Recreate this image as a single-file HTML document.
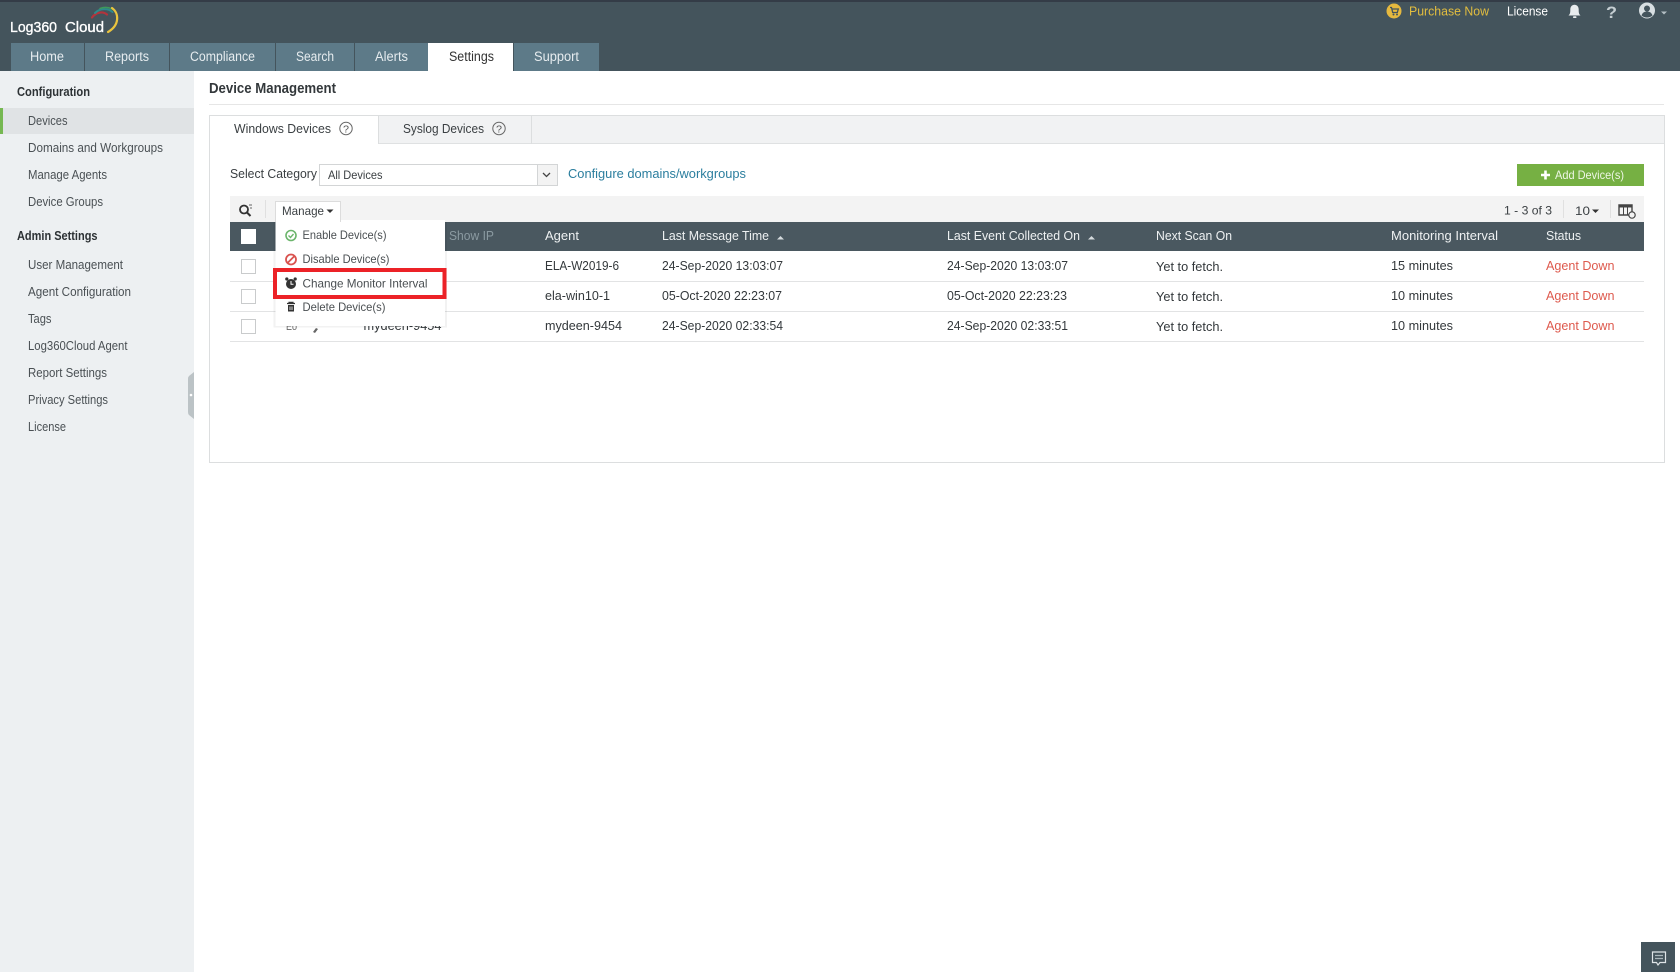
<!DOCTYPE html>
<html lang="en">
<head>
<meta charset="utf-8">
<title>Log360 Cloud - Device Management</title>
<style>
html,body{margin:0;padding:0;width:1680px;height:972px;overflow:hidden;background:#fff}
svg{display:block;filter:blur(.35px)}
text{font-family:"Liberation Sans",Arial,sans-serif;font-size:13px;fill:#3a3f42}
.nav{font-size:13.5px;fill:#e6ecef;text-anchor:start}
.side{fill:#4a5054;font-size:12.5px}
.b{font-weight:bold;fill:#2d3235;font-size:12.5px}
.th{fill:#eef1f2;font-size:13px}
.td{font-size:12.5px;fill:#33383b}
.red{fill:#de5a4e;font-size:12.5px}
.dd{fill:#4a4f52;font-size:12px}
</style>
</head>
<body>
<svg width="1680" height="972" viewBox="0 0 1680 972" xmlns="http://www.w3.org/2000/svg">
<rect width="1680" height="972" fill="#fff"/>

<!-- header -->
<rect width="1680" height="71" fill="#44545c"/>
<rect width="1680" height="2" fill="#343c47"/>
<text x="10" y="32" textLength="47" lengthAdjust="spacingAndGlyphs" style="font-size:15px;fill:#fff;stroke:#fff;stroke-width:.35px">Log360</text>
<text x="65" y="32" textLength="39" lengthAdjust="spacingAndGlyphs" style="font-size:15px;fill:#fff;stroke:#fff;stroke-width:.35px">Cloud</text>
<g fill="none" stroke-linecap="round">
<path d="M92 17.500C96 12 103 11 107 14.500" stroke="#b3343c" stroke-width="2.200"/>
<path d="M95 13C100 8 108 8 112.500 12" stroke="#2d8a8c" stroke-width="2"/>
<path d="M100 8.500C104 7 108 7 112 9" stroke="#3f9a5b" stroke-width="1.500"/>
<path d="M112 8C119 13 120 25 108 32" stroke="#eac43e" stroke-width="2.200"/>
</g>

<!-- nav tabs -->
<g fill="#5d7a88">
<rect x="11" y="43" width="73" height="28"/>
<rect x="85" y="43" width="84" height="28"/>
<rect x="170" y="43" width="105" height="28"/>
<rect x="276" y="43" width="78" height="28"/>
<rect x="355" y="43" width="73" height="28"/>
<rect x="514" y="43" width="85" height="28"/>
</g>
<rect x="428" y="43" width="85" height="28" fill="#fff"/>
<text class="nav" x="30" y="61" textLength="34" lengthAdjust="spacingAndGlyphs">Home</text>
<text class="nav" x="105" y="61" textLength="44" lengthAdjust="spacingAndGlyphs">Reports</text>
<text class="nav" x="190" y="61" textLength="65" lengthAdjust="spacingAndGlyphs">Compliance</text>
<text class="nav" x="296" y="61" textLength="38" lengthAdjust="spacingAndGlyphs">Search</text>
<text class="nav" x="375" y="61" textLength="33" lengthAdjust="spacingAndGlyphs">Alerts</text>
<text class="nav" x="449" y="61" textLength="45" lengthAdjust="spacingAndGlyphs" style="fill:#333">Settings</text>
<text class="nav" x="534" y="61" textLength="45" lengthAdjust="spacingAndGlyphs">Support</text>

<!-- top right -->
<circle cx="1394" cy="11" r="7.500" fill="#e6b93f"/>
<path d="M1390 7.500h1.500l1.200 5h4.600l1-3.500h-6.200" fill="none" stroke="#44545c" stroke-width="1.300"/>
<circle cx="1393.500" cy="14.500" r="1" fill="#44545c"/><circle cx="1397" cy="14.500" r="1" fill="#44545c"/>
<text x="1409" y="15.500" textLength="80" lengthAdjust="spacingAndGlyphs" style="font-size:13px;fill:#e2bd3f">Purchase Now</text>
<text x="1507" y="15.500" textLength="41" lengthAdjust="spacingAndGlyphs" style="font-size:13px;fill:#fff">License</text>
<path d="M1568.500 15.500c1.800-1.700 1.800-3.200 1.800-6 0-2.800 1.800-4.700 4.200-4.700s4.200 1.900 4.200 4.700c0 2.800 0 4.300 1.800 6z" fill="#e8ecee"/>
<rect x="1573" y="16.300" width="3.500" height="1.700" rx=".8" fill="#e8ecee"/>
<text x="1606" y="18" textLength="11" lengthAdjust="spacingAndGlyphs" style="font-size:17px;font-weight:bold;fill:#c5ced2">?</text>
<circle cx="1647" cy="10.500" r="8" fill="#d8dfe2"/>
<circle cx="1647" cy="8.500" r="3" fill="#44545c"/>
<path d="M1641.500 15.500c1-3 3-4 5.500-4s4.500 1 5.500 4c-1.500 1.300-3.500 2-5.500 2s-4-.7-5.500-2z" fill="#44545c"/>
<path d="M1661 11.500h6l-3 3z" fill="#b5c0c5"/>

<!-- sidebar -->
<rect x="0" y="71" width="194" height="901" fill="#edf0f2"/>
<rect x="0" y="108" width="194" height="26" fill="#e0e3e5"/>
<rect x="0" y="108" width="3" height="26" fill="#76b852"/>
<text class="b" x="17" y="96" textLength="73" lengthAdjust="spacingAndGlyphs">Configuration</text>
<text class="side" x="28" y="125" textLength="39.500" lengthAdjust="spacingAndGlyphs">Devices</text>
<text class="side" x="28" y="152" textLength="135" lengthAdjust="spacingAndGlyphs">Domains and Workgroups</text>
<text class="side" x="28" y="179" textLength="79" lengthAdjust="spacingAndGlyphs">Manage Agents</text>
<text class="side" x="28" y="206" textLength="75" lengthAdjust="spacingAndGlyphs">Device Groups</text>
<text class="b" x="17" y="240" textLength="80.500" lengthAdjust="spacingAndGlyphs">Admin Settings</text>
<text class="side" x="28" y="269" textLength="95" lengthAdjust="spacingAndGlyphs">User Management</text>
<text class="side" x="28" y="296" textLength="103" lengthAdjust="spacingAndGlyphs">Agent Configuration</text>
<text class="side" x="28" y="323" textLength="23.500" lengthAdjust="spacingAndGlyphs">Tags</text>
<text class="side" x="28" y="350" textLength="99.500" lengthAdjust="spacingAndGlyphs">Log360Cloud Agent</text>
<text class="side" x="28" y="377" textLength="79" lengthAdjust="spacingAndGlyphs">Report Settings</text>
<text class="side" x="28" y="404" textLength="80" lengthAdjust="spacingAndGlyphs">Privacy Settings</text>
<text class="side" x="28" y="431" textLength="38" lengthAdjust="spacingAndGlyphs">License</text>
<path d="M194 372v47l-5-4q-1-1-1-3v-33q0-2 1-3z" fill="#bcc3c6"/>
<circle cx="191" cy="395" r="1.300" fill="#fff"/>

<!-- page title -->
<text x="209" y="93" textLength="127" lengthAdjust="spacingAndGlyphs" style="font-size:15px;font-weight:bold;fill:#33383b">Device Management</text>
<rect x="209" y="104" width="1455" height="1" fill="#e6e6e6"/>

<!-- panel -->
<rect x="209.500" y="115.500" width="1455" height="347" fill="#fff" stroke="#dcdedf"/>
<rect x="210" y="116" width="1454" height="27" fill="#f1f2f3"/>
<rect x="210" y="143" width="1454" height="1" fill="#dfe1e2"/>
<rect x="210" y="116" width="168" height="28" fill="#fff"/>
<rect x="378" y="116" width="1" height="28" fill="#dcdedf"/>
<rect x="531" y="116" width="1" height="28" fill="#dcdedf"/>
<text x="234" y="133" textLength="97" lengthAdjust="spacingAndGlyphs" style="font-size:13px">Windows Devices</text>
<circle cx="346" cy="128.500" r="6.200" fill="none" stroke="#666" stroke-width="1"/>
<text x="343" y="132.500" textLength="6" lengthAdjust="spacingAndGlyphs" style="font-size:10px;fill:#555">?</text>
<text x="403" y="133" textLength="81" lengthAdjust="spacingAndGlyphs" style="font-size:13px">Syslog Devices</text>
<circle cx="499" cy="128.500" r="6.200" fill="none" stroke="#666" stroke-width="1"/>
<text x="496" y="132.500" textLength="6" lengthAdjust="spacingAndGlyphs" style="font-size:10px;fill:#555">?</text>

<!-- category row -->
<text x="230" y="178" textLength="87" lengthAdjust="spacingAndGlyphs" style="font-size:13px">Select Category</text>
<rect x="319.500" y="164.500" width="238" height="21" fill="#fff" stroke="#d3d5d6"/>
<rect x="537" y="165" width="20" height="20" fill="#f3f3f3"/>
<rect x="537" y="165" width="1" height="20" fill="#d3d5d6"/>
<path d="M543 173l3.500 3.500 3.500-3.500" fill="none" stroke="#444" stroke-width="1.300"/>
<text x="328" y="179" textLength="54.500" lengthAdjust="spacingAndGlyphs" style="font-size:12px">All Devices</text>
<text x="568" y="178" textLength="178" lengthAdjust="spacingAndGlyphs" style="font-size:13px;fill:#2b7e9e">Configure domains/workgroups</text>
<rect x="1517" y="164" width="127" height="22" fill="#76b043"/>
<path d="M1541 175h9M1545.500 170.500v9" stroke="#fff" stroke-width="2.600"/>
<text x="1555" y="179" textLength="69" lengthAdjust="spacingAndGlyphs" style="font-size:12px;fill:#eef6e6">Add Device(s)</text>

<!-- toolbar -->
<rect x="230" y="196" width="1414" height="26" fill="#f3f3f3"/>
<circle cx="244" cy="209.500" r="4" fill="none" stroke="#333" stroke-width="1.800"/>
<path d="M247 212.500l3.500 3.500" stroke="#333" stroke-width="2"/>
<path d="M249 205h3M250 208h2" stroke="#666" stroke-width="1"/>
<rect x="265" y="200" width="1" height="18" fill="#e0e0e0"/>
<text x="1504" y="214.500" textLength="48" lengthAdjust="spacingAndGlyphs" style="font-size:12px">1 - 3 of 3</text>
<rect x="1563" y="200" width="1" height="18" fill="#e0e0e0"/>
<text x="1575" y="215" textLength="15" lengthAdjust="spacingAndGlyphs" style="font-size:12px">10</text>
<path d="M1592 209.500h7l-3.500 3.500z" fill="#333"/>
<rect x="1610" y="200" width="1" height="18" fill="#e0e0e0"/>
<path d="M1619 205h13v10h-13z" fill="none" stroke="#444" stroke-width="1.400"/>
<path d="M1619 205h13v2.500h-13z" fill="#444"/>
<path d="M1623.500 206v9M1627.500 206v9" stroke="#444"/>
<circle cx="1632" cy="215" r="3.200" fill="#f3f3f3" stroke="#444" stroke-width="1.200"/>

<!-- table header -->
<rect x="230" y="222" width="1414" height="29" fill="#4a5860"/>
<rect x="241" y="229" width="15" height="15" fill="#fff"/>
<text class="th" x="449" y="240" textLength="45" lengthAdjust="spacingAndGlyphs" style="fill:#8b9aa1">Show IP</text>
<text class="th" x="545" y="240" textLength="34" lengthAdjust="spacingAndGlyphs">Agent</text>
<text class="th" x="662" y="240" textLength="107" lengthAdjust="spacingAndGlyphs">Last Message Time</text>
<path d="M777 239.500h7l-3.500-3.500z" fill="#d5dbde"/>
<text class="th" x="947" y="240" textLength="133" lengthAdjust="spacingAndGlyphs">Last Event Collected On</text>
<path d="M1088 239.500h7l-3.500-3.500z" fill="#d5dbde"/>
<text class="th" x="1156" y="240" textLength="76" lengthAdjust="spacingAndGlyphs">Next Scan On</text>
<text class="th" x="1391" y="240" textLength="107" lengthAdjust="spacingAndGlyphs">Monitoring Interval</text>
<text class="th" x="1546" y="240" textLength="35" lengthAdjust="spacingAndGlyphs">Status</text>

<!-- rows -->
<g fill="#e2e3e4">
<rect x="230" y="281" width="1414" height="1"/>
<rect x="230" y="311" width="1414" height="1"/>
<rect x="230" y="341" width="1414" height="1"/>
</g>
<g fill="#fff" stroke="#c9cbcc">
<rect x="241.500" y="259.500" width="14" height="14"/>
<rect x="241.500" y="289.500" width="14" height="14"/>
<rect x="241.500" y="319.500" width="14" height="14"/>
</g>

<text class="td" x="286" y="330" textLength="11" lengthAdjust="spacingAndGlyphs" style="font-size:11px;fill:#666">Eo</text>
<path d="M313 332l3-4 2 1-3 4z" fill="#666"/>
<text class="td" x="363.500" y="330" textLength="78" lengthAdjust="spacingAndGlyphs">mydeen-9454</text>

<text class="td" x="545" y="270" textLength="74" lengthAdjust="spacingAndGlyphs">ELA-W2019-6</text>
<text class="td" x="662" y="270" textLength="121" lengthAdjust="spacingAndGlyphs">24-Sep-2020 13:03:07</text>
<text class="td" x="947" y="270" textLength="121" lengthAdjust="spacingAndGlyphs">24-Sep-2020 13:03:07</text>
<text class="td" x="1156" y="271" textLength="67" lengthAdjust="spacingAndGlyphs">Yet to fetch.</text>
<text class="td" x="1391" y="270" textLength="62" lengthAdjust="spacingAndGlyphs">15 minutes</text>
<text class="red" x="1546" y="270" textLength="68.500" lengthAdjust="spacingAndGlyphs">Agent Down</text>

<text class="td" x="545" y="300" textLength="65" lengthAdjust="spacingAndGlyphs">ela-win10-1</text>
<text class="td" x="662" y="300" textLength="120" lengthAdjust="spacingAndGlyphs">05-Oct-2020 22:23:07</text>
<text class="td" x="947" y="300" textLength="120" lengthAdjust="spacingAndGlyphs">05-Oct-2020 22:23:23</text>
<text class="td" x="1156" y="301" textLength="67" lengthAdjust="spacingAndGlyphs">Yet to fetch.</text>
<text class="td" x="1391" y="300" textLength="62" lengthAdjust="spacingAndGlyphs">10 minutes</text>
<text class="red" x="1546" y="300" textLength="68.500" lengthAdjust="spacingAndGlyphs">Agent Down</text>

<text class="td" x="545" y="330" textLength="77" lengthAdjust="spacingAndGlyphs">mydeen-9454</text>
<text class="td" x="662" y="330" textLength="121" lengthAdjust="spacingAndGlyphs">24-Sep-2020 02:33:54</text>
<text class="td" x="947" y="330" textLength="121" lengthAdjust="spacingAndGlyphs">24-Sep-2020 02:33:51</text>
<text class="td" x="1156" y="331" textLength="67" lengthAdjust="spacingAndGlyphs">Yet to fetch.</text>
<text class="td" x="1391" y="330" textLength="62" lengthAdjust="spacingAndGlyphs">10 minutes</text>
<text class="red" x="1546" y="330" textLength="68.500" lengthAdjust="spacingAndGlyphs">Agent Down</text>

<!-- dropdown -->
<rect x="273.500" y="222" width="173.500" height="105.500" fill="#000" opacity=".05"/>
<rect x="275.500" y="220" width="169.500" height="106" fill="#fff"/>
<rect x="275.500" y="201.500" width="65" height="20" fill="#fff" stroke="#dcdcdc"/>
<rect x="276" y="219" width="64" height="3" fill="#fff"/>
<text x="282" y="215" textLength="42" lengthAdjust="spacingAndGlyphs" style="font-size:12px">Manage</text>
<path d="M326.500 209.500h7l-3.500 3.500z" fill="#333"/>
<circle cx="291" cy="235.500" r="5" fill="none" stroke="#6cb56c" stroke-width="1.600"/>
<path d="M288.500 235.500l2 2 3-3.500" fill="none" stroke="#6cb56c" stroke-width="1.400"/>
<text class="dd" x="302.500" y="239" textLength="84" lengthAdjust="spacingAndGlyphs">Enable Device(s)</text>
<circle cx="291" cy="259.500" r="5" fill="none" stroke="#d9534f" stroke-width="1.800"/>
<path d="M287.500 263l7-7" stroke="#d9534f" stroke-width="1.800"/>
<text class="dd" x="302.500" y="263" textLength="87" lengthAdjust="spacingAndGlyphs">Disable Device(s)</text>
<circle cx="291" cy="284" r="5" fill="#333"/>
<path d="M291 281v3.200h2.500" fill="none" stroke="#fff" stroke-width="1"/>
<circle cx="286.800" cy="279" r="1.600" fill="#333"/><circle cx="295.200" cy="279" r="1.600" fill="#333"/>
<text class="dd" x="302.500" y="287.500" textLength="125" lengthAdjust="spacingAndGlyphs">Change Monitor Interval</text>
<path d="M287 303.500h8M289 303.500v-1.200h4v1.200" fill="none" stroke="#333" stroke-width="1.200"/>
<path d="M288 305h6v6.500h-6z" fill="#333"/>
<path d="M290 306.500v3.500M292 306.500v3.500" stroke="#fff" stroke-width=".8"/>
<text class="dd" x="302.500" y="311" textLength="83" lengthAdjust="spacingAndGlyphs">Delete Device(s)</text>
<rect x="275" y="270" width="169.500" height="27" fill="none" stroke="#ec2227" stroke-width="4"/>

<!-- chat -->
<rect x="1641" y="942" width="34" height="30" fill="#44545c"/>
<path d="M1652.500 952h13v10.500h-5.500l-2 2.500-1.500-2.500h-4z" fill="none" stroke="#dfe5e8" stroke-width="1.200"/>
<path d="M1655 955.500h8M1655 958.500h8" stroke="#aab6bb" stroke-width="1.200"/>
</svg>
</body>
</html>
